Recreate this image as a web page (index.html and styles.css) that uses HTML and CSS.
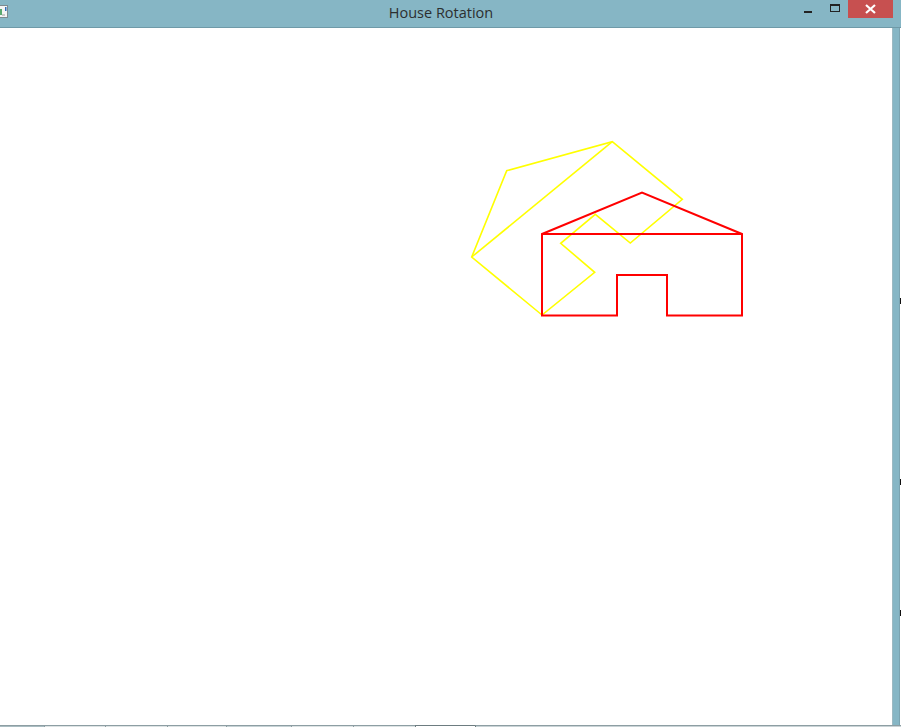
FILE: index.html
```html
<!DOCTYPE html>
<html>
<head>
<meta charset="utf-8">
<title>House Rotation</title>
<link rel="stylesheet" href="styles.css">
</head>
<body>
<div class="window">
  <div class="titlebar">
    <svg class="app-icon" width="9" height="13" viewBox="0 0 9 13">
      <rect x="0.5" y="0.5" width="8" height="12" fill="#f4f4f4" stroke="#7d8a8f"/>
      <rect x="0" y="4" width="3" height="6" fill="#5aa96f"/>
      <rect x="6" y="2" width="1.5" height="4" fill="#2f6fb8"/>
      <rect x="3" y="9" width="3" height="2" fill="#c8c8c8"/>
    </svg>
    <div class="title">House Rotation</div>
    <div class="controls">
      <div class="btn min"><span class="min-bar"></span></div>
      <div class="btn max"><span class="max-box"></span></div>
      <div class="btn close">
        <svg width="11" height="10" viewBox="0 0 11 10">
          <path d="M1 1 L10 9 M10 1 L1 9" stroke="#fff" stroke-width="2.2" fill="none"/>
        </svg>
      </div>
    </div>
  </div>
  <div class="main">
    <div class="canvas">
      <svg class="drawing" width="892" height="697" viewBox="0 28 892 697">
        <polygon class="yellow" points="542,315 471.7,257 506.7,170.7 612.3,141.7 682.3,199.3 630.3,243 595.3,214.3 560.7,243.3 594.7,272.3"/>
        <line class="yellow" x1="471.7" y1="257" x2="612.3" y2="141.7"/>
        <polygon class="red" points="542,315.5 542,234 642,192.5 742,234 742,315.5 667,315.5 667,275 617,275 617,315.5"/>
        <line class="red" x1="542" y1="234" x2="742" y2="234"/>
      </svg>
    </div>
    <div class="frame-right">
      <div class="frame-line"></div>
      <div class="frame-blue"></div>
      <div class="frame-dark"></div>
      <div class="frame-edge">
        <span class="tick t1"></span>
        <span class="tick t2"></span>
        <span class="tick t3"></span>
      </div>
    </div>
  </div>
  <div class="taskstrip">
    <div class="seg s0"></div>
    <div class="seg s1"></div>
    <div class="seg s2"></div>
    <div class="seg s3"></div>
    <div class="seg s4"></div>
    <div class="seg s5"></div>
    <div class="seg s6"></div>
    <div class="seg s7"></div>
    <div class="seg rest"></div>
  </div>
</div>
</body>
</html>
```
FILE: styles.css
```css
html, body {
  margin: 0;
  padding: 0;
  background: #ffffff;
}
.window {
  width: 901px;
  height: 727px;
  display: flex;
  flex-direction: column;
  overflow: hidden;
}
.titlebar {
  height: 27px;
  border-bottom: 1px solid #6f9aa8;
  background: #86b6c5;
  display: flex;
  align-items: flex-start;
  position: relative;
  flex: none;
}
.app-icon {
  margin-top: 5px;
  margin-left: -1px;
  flex: none;
}
.title {
  position: absolute;
  left: 0;
  right: 0;
  top: 4px;
  text-align: center;
  padding-right: 19px;
  font-family: "Open Sans", "Noto Sans", sans-serif;
  font-size: 14.5px;
  line-height: 18px;
  color: #2c2f30;
}
.controls {
  margin-left: auto;
  margin-right: 8px;
  display: flex;
  align-items: flex-start;
}
.btn {
  height: 18px;
  display: flex;
  align-items: center;
  justify-content: center;
}
.min {
  width: 28px;
}
.min-bar {
  width: 8px;
  height: 2px;
  background: #222;
  margin-top: 5px;
}
.max {
  width: 26px;
}
.max-box {
  width: 8px;
  height: 5px;
  border: 1px solid #222;
  border-top-width: 2px;
  margin-top: -2px;
}
.close {
  width: 45px;
  background: #c75050;
}
.main {
  flex: 1;
  display: flex;
  min-height: 0;
}
.canvas {
  width: 892px;
  background: #ffffff;
  flex: none;
}
.drawing {
  display: block;
}
.red {
  fill: none;
  stroke: #ff0000;
  stroke-width: 2;
  stroke-linejoin: miter;
}
.yellow {
  fill: none;
  stroke: #ffff00;
  stroke-width: 1.6;
}
.frame-right {
  display: flex;
  flex: none;
}
.frame-line {
  width: 1px;
  background: #9cb9c2;
}
.frame-blue {
  width: 6px;
  background: #86b6c5;
}
.frame-dark {
  width: 1px;
  background: #7aa3b0;
}
.frame-edge {
  width: 1px;
  background: #ffffff;
  position: relative;
}
.tick {
  position: absolute;
  left: 0;
  width: 1px;
  height: 6px;
  background: #111;
}
.t1 { top: 270px; }
.t2 { top: 451px; }
.t3 { top: 582px; }
.taskstrip {
  height: 2px;
  display: flex;
  flex: none;
  background: #dfe4e5;
}
.seg {
  height: 2px;
  box-sizing: border-box;
  border-top: 1px solid #8d9ea3;
  border-left: 1px solid #8d9ea3;
  background: #dde3e4;
  flex: none;
}
.s0 { width: 44px; background: #a9bcc1; border-left: none; }
.s1 { width: 61px; }
.s2 { width: 62px; }
.s3 { width: 59px; }
.s4 { width: 65px; background: #c6d2d5; }
.s5 { width: 62px; }
.s6 { width: 62px; }
.s7 { width: 60px; background: #ffffff; border-color: #6d7c80; }
.rest { flex: 1; background: #c9d3d6; border-left: 1px solid #6d7c80; }
```
